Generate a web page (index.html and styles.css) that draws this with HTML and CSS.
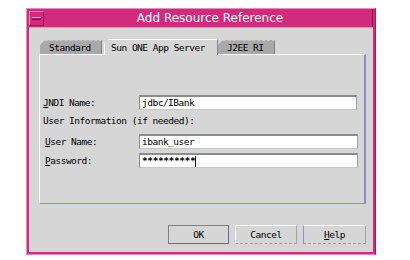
FILE: index.html
```html
<!DOCTYPE html>
<html>
<head>
<meta charset="utf-8">
<link rel="stylesheet" href="styles.css">
</head>
<body>
<div class="window">
  <div class="titlebar">
    <div class="menubtn"><span class="minus"></span></div>
    <div class="title">Add Resource Reference</div>
  </div>
  <div class="client">
    <div class="tabs">
      <div class="tab t-std">Standard</div>
      <div class="tab active">Sun ONE App Server</div>
      <div class="tab t-ri">J2EE RI</div>
    </div>
    <div class="panel">
      <div class="row">
        <span class="label"><u>J</u>NDI Name:</span>
        <span class="field">jdbc/IBank</span>
      </div>
      <div class="section">User Information (if needed):</div>
      <div class="row sub">
        <span class="label"><u>U</u>ser Name:</span>
        <span class="field">ibank_user</span>
      </div>
      <div class="row sub pw">
        <span class="label"><u>P</u>assword:</span>
        <span class="field">**********<span class="caret"></span></span>
      </div>
    </div>
    <div class="buttons">
      <div class="btn default">OK</div>
      <div class="btn">Cancel</div>
      <div class="btn help"><u>H</u>elp</div>
    </div>
  </div>
</div>
</body>
</html>
```
FILE: styles.css
```css
html, body {
  margin: 0;
  padding: 0;
  background: #ffffff;
}
body {
  font-family: "DejaVu Sans Mono", "Liberation Mono", monospace;
  font-size: 9.5px;
  letter-spacing: -0.5px;
  color: #000;
}
.window {
  margin: 8px 0 0 26px;
  width: 350px;
  height: 247px;
  box-sizing: border-box;
  background: #d22a7c;
  border-top: 1px solid #e98ab8;
  border-left: 1px solid #e98ab8;
  border-right: 1px solid #a01c5c;
  border-bottom: 1px solid #e98ab8;
  padding: 0 2px 2px 2px;
  display: flex;
  flex-direction: column;
}
.titlebar {
  height: 18px;
  display: flex;
  align-items: center;
  border-right: 1px solid #7a1040;
}
.menubtn {
  width: 15px;
  height: 15px;
  box-sizing: border-box;
  border: 1px solid #e98ab8;
  border-right-color: #9a1a58;
  border-bottom-color: #9a1a58;
  display: flex;
  align-items: center;
  justify-content: center;
}
.minus {
  width: 9px;
  height: 3px;
  box-sizing: border-box;
  background: #b81e66;
  border-top: 1px solid #f4b8d4;
  border-bottom: 1px solid #70103c;
}
.title {
  flex: 1;
  text-align: center;
  color: #ffffff;
  font-family: "DejaVu Sans", sans-serif;
  font-size: 12px;
  letter-spacing: 0;
  padding-left: 4px;
}
.client {
  flex: 1;
  background: #d6d6d6;
  display: flex;
  flex-direction: column;
  padding: 11px 7px 8px 10px;
  border-top: 1px solid #b0b0b0;
}
.tabs {
  display: flex;
  align-items: flex-end;
  height: 15px;
  padding-left: 1px;
}
.tab {
  height: 14px;
  box-sizing: border-box;
  padding-left: 9px;
  line-height: 13px;
  background: #a9a9a9;
  border-top: 1px dashed #c8c8c8;
  border-right: 1px solid #808080;
  clip-path: polygon(0 100%, 0 5px, 5px 0, 100% 0, 100% 100%);
  white-space: nowrap;
}
.t-std {
  width: 62px;
  margin-right: 2px;
}
.t-ri {
  width: 57px;
}
.tab.active {
  width: 114px;
  height: 16px;
  background: #d6d6d6;
  border-top: 1px solid #ffffff;
  border-left: 1px solid #ffffff;
  border-right: 1px solid #8080b0;
  line-height: 15px;
  padding-left: 6px;
  margin-bottom: -1px;
  position: relative;
  z-index: 1;
}
.panel {
  height: 150px;
  box-sizing: border-box;
  border-top: 1px solid #ffffff;
  border-left: 1px solid #ffffff;
  border-right: 2px solid #8c8cc8;
  border-bottom: 1px solid #8c8cc8;
  padding: 40px 7px 0 3px;
  display: flex;
  flex-direction: column;
}
.row {
  display: flex;
  align-items: center;
  height: 15px;
}
.label {
  width: 96px;
  flex: none;
}
.sub .label {
  padding-left: 2px;
  width: 94px;
}
.field {
  flex: 1;
  height: 15px;
  box-sizing: border-box;
  background: #ffffff;
  border-top: 2px solid #8c8c8c;
  border-left: 1px solid #8c8c8c;
  border-right: 1px solid #9a9ad0;
  border-bottom: 1px solid #c8c8c8;
  padding-left: 2px;
  line-height: 12px;
  display: flex;
  align-items: center;
}
.sub .field {
  margin-right: -1px;
}
.caret {
  width: 1px;
  height: 11px;
  background: #000;
}
.pw .field {
  letter-spacing: -0.4px;
  font-weight: bold;
}
.section {
  margin-top: 4px;
  height: 14px;
  line-height: 14px;
}
.row.sub {
  margin-top: 4px;
}
.section + .row.sub {
  margin-top: 6px;
}
.buttons {
  margin-top: auto;
  display: flex;
  justify-content: flex-end;
  gap: 6px;
}
.btn {
  height: 19px;
  box-sizing: border-box;
  width: 62px;
  text-align: center;
  line-height: 17px;
  border-top: 1px solid #ffffff;
  border-left: 1px solid #ffffff;
  border-right: 1px solid #a0a0a0;
  border-bottom: 1px dashed #a0a0a0;
}
.btn.default {
  width: 61px;
  border: 1px solid #6a6a98;
  border-top-color: #808080;
  border-left-color: #808080;
}
.btn.help {
  width: 63px;
  border-left-color: #9090d0;
}
```
